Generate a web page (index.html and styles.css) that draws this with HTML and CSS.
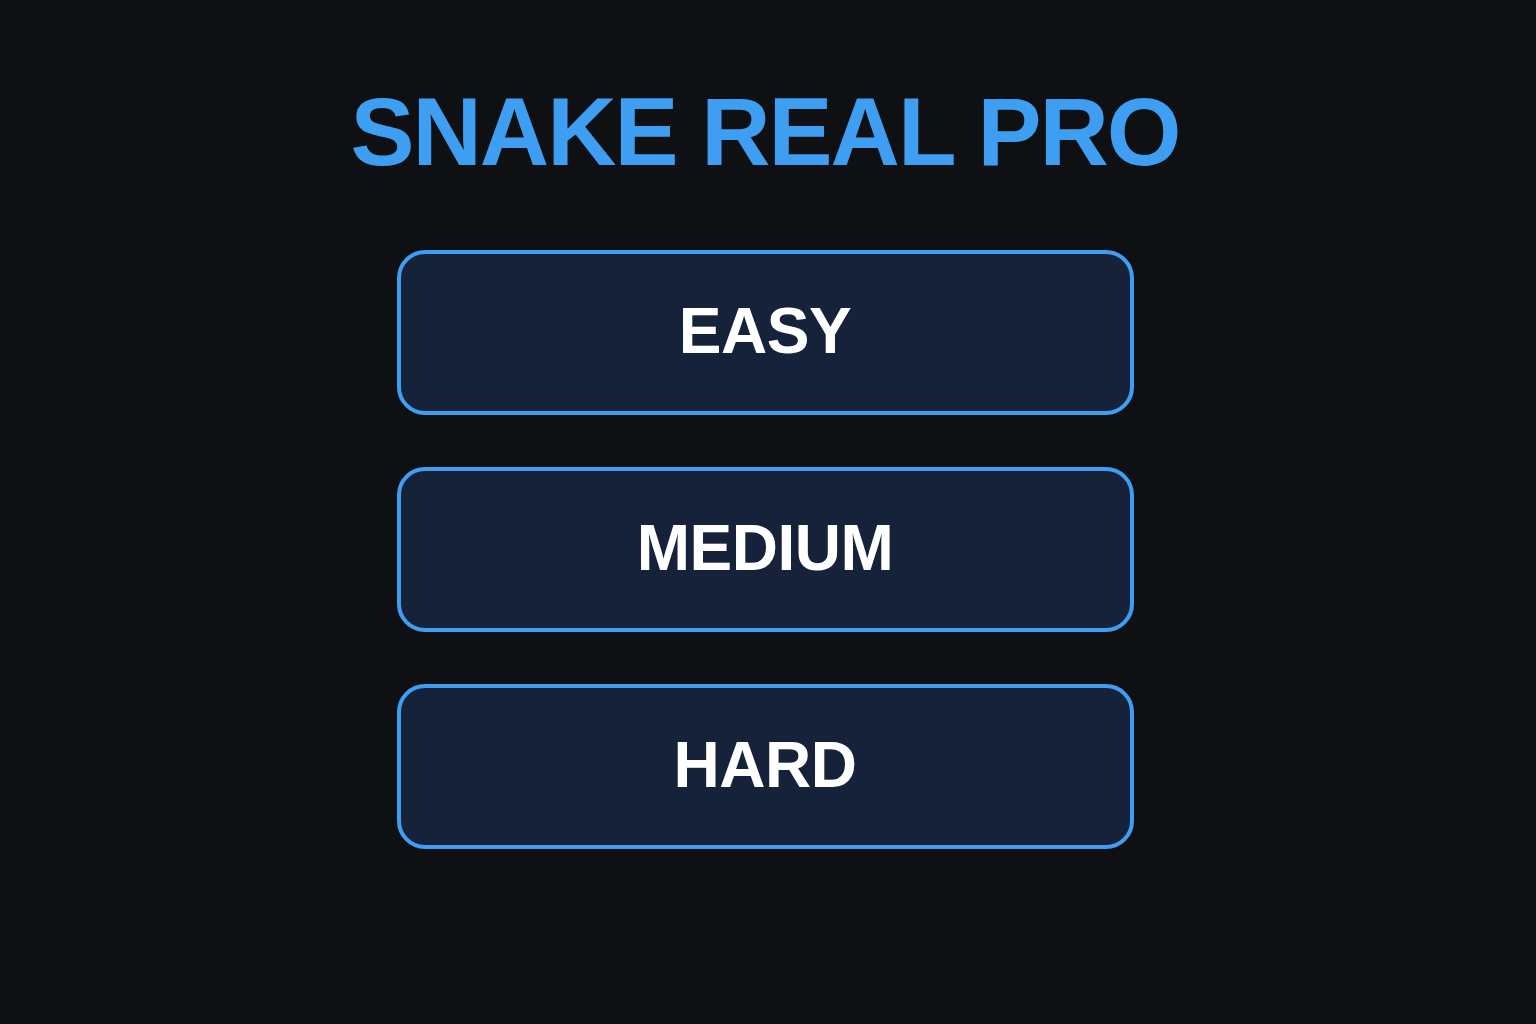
FILE: index.html
```html
<!DOCTYPE html>
<html lang="en">
<head>
    <meta charset="UTF-8">
    <meta name="viewport" content="width=device-width, initial-scale=1.0">
    <title>Snake Real Pro</title>
    <link rel="stylesheet" href="styles.css">
</head>
<body>
    <div class="menu">
        <h1 class="title">SNAKE REAL PRO</h1>

        <!-- Difficulty picker -->
        <div class="levels">
            <button class="level-btn">EASY</button>
            <button class="level-btn">MEDIUM</button>
            <button class="level-btn">HARD</button>
        </div>
    </div>
</body>
</html>
```

FILE: styles.css
```css
:root {
    --bg-color: #0f1013;
    --accent-color: #3d9ef2;
    --button-bg: #15223a;
    --text-color: #ffffff;
}

* {
    margin: 0;
    padding: 0;
    box-sizing: border-box;
    font-family: 'Liberation Sans', Arial, sans-serif;
}

body {
    background-color: var(--bg-color);
    color: var(--text-color);
    height: 1024px;
    overflow: hidden;
}

.menu {
    display: flex;
    flex-direction: column;
    align-items: center;
    padding: 84px 6px 0 0;
}

.title {
    font-size: 96px;
    font-weight: 700;
    line-height: 1;
    letter-spacing: -2px;
    color: var(--accent-color);
}

.levels {
    display: flex;
    flex-direction: column;
    gap: 52px;
    margin-top: 70px;
}

.level-btn {
    width: 737px;
    height: 165px;
    background: var(--button-bg);
    border: 4px solid var(--accent-color);
    border-radius: 28px;
    color: var(--text-color);
    font-size: 64px;
    font-weight: 700;
    line-height: 1;
    letter-spacing: -0.5px;
    padding-bottom: 4px;
    cursor: pointer;
    transition: all 0.3s ease;
}

.level-btn:hover {
    background: #1b2d4d;
}
```
